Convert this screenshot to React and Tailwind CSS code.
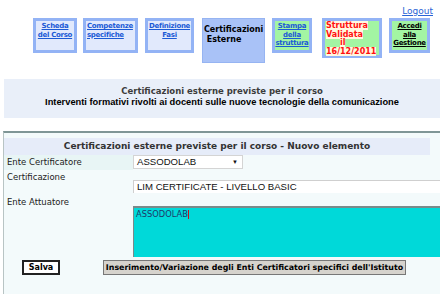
import React from "react";

const tabBox = "border-[3px] border-[#93b3f5] shrink-0";
const tabFont = { fontFamily: '"DejaVu Sans", Verdana, sans-serif' };

function Tab({ w, h, ml, bg, children, className = "" }) {
  return (
    <div className={`${tabBox} ${bg} ${ml} ${w} ${h} ${className}`} style={tabFont}>
      {children}
    </div>
  );
}

export default function App() {
  return (
    <div className="w-[440px] h-[294px] overflow-hidden bg-white" style={tabFont}>
      {/* top bar */}
      <div className="h-[18px] flex justify-end pr-[7px] pt-[6px]">
        <a className="text-[9px] leading-[10px] text-[#2a64d6] underline">Logout</a>
      </div>

      {/* tabs */}
      <div className="flex items-start h-[61px] text-[7px] leading-[8.6px] font-bold tracking-[-0.3px] whitespace-nowrap">
        <Tab ml="ml-[33px]" w="w-[44px]" h="h-[35px]" bg="bg-[#e1e9fc]" className="text-center pt-[1px]">
          <a className="text-[#1b5ad6] underline">Scheda<br />del Corso</a>
        </Tab>
        <Tab ml="ml-[6px]" w="w-[55px]" h="h-[35px]" bg="bg-[#e1e9fc]" className="pt-[1px] pl-[1px]">
          <a className="text-[#1b5ad6] underline">Competenze<br />specifiche</a>
        </Tab>
        <Tab ml="ml-[7px]" w="w-[49px]" h="h-[35px]" bg="bg-[#e1e9fc]" className="text-center pt-[1px]">
          <a className="text-[#1b5ad6] underline">Definizione<br />Fasi</a>
        </Tab>
        <div className="ml-[8px] w-[63px] h-[45px] bg-[#a9c2f7] border border-[#96b4f2] pt-[6px] pl-[1px] text-[8px] leading-[10px] tracking-normal text-black">
          Certificazioni<br />&nbsp;Esterne
        </div>
        <Tab ml="ml-[7px]" w="w-[40px]" h="h-[35px]" bg="bg-[#a3f5a3]" className="text-center pt-[1px]">
          <a className="text-[#1b5ad6] underline">Stampa<br />della<br />struttura</a>
        </Tab>
        <Tab ml="ml-[10px]" w="w-[60px]" h="h-[40px]" bg="bg-[#a3f5a3]" className="pt-[1px] pl-[1px] text-[8px] leading-[8.7px] tracking-normal text-[#ff1010]">
          <span className="bg-[#fff8e0]">Struttura</span><br />
          <span className="bg-[#fff8e0]">Validata</span><br />
          <span className="ml-[14px] bg-[#fff8e0]">il</span><br />
          <span className="bg-[#fff8e0]">16/12/2011</span>
        </Tab>
        <Tab ml="ml-[7px]" w="w-[41px]" h="h-[35px]" bg="bg-[#a3f5a3]" className="text-center pt-[1px]">
          <a className="text-black underline">Accedi<br />alla<br />Gestione</a>
        </Tab>
      </div>

      {/* header */}
      <div className="ml-[4px] h-[39px] bg-[#e9eff9] flex flex-col items-center pt-[7px]">
        <div className="text-[8.5px] leading-[10px] font-bold text-[#3c3c3c]">
          Certificazioni esterne previste per il corso
        </div>
        <div
          className="mt-[1px] text-[9.3px] leading-[11px] font-bold text-black"
          style={{ fontFamily: '"Liberation Sans", Arial, sans-serif' }}
        >
          Interventi formativi rivolti ai docenti sulle nuove tecnologie della comunicazione
        </div>
      </div>

      {/* form panel */}
      <div className="mt-[13px] ml-[3px] h-[163px] border-t-2 border-l border-t-[#7f9696] border-l-[#b8c4c4] bg-[#f3fafb]">
        <div className="mt-[5px] w-[426px] h-[17px] bg-[#e6ecf9] flex items-center justify-center text-[9px] font-bold text-[#333]">
          Certificazioni esterne previste per il corso - Nuovo elemento
        </div>

        <div className="flex h-[15px]">
          <div className="w-[129px] pl-[3px] bg-[#e8f5f5] text-[8.5px] leading-[15px] text-[#222]">Ente Certificatore</div>
          <div
            className="w-[110px] h-[14px] bg-white border border-[#d4d4d4] flex items-center justify-between pl-[3px] pr-[4px] text-[9.6px] text-[#111]"
            style={{ fontFamily: '"Liberation Sans", Arial, sans-serif' }}
          >
            <span>ASSODOLAB</span>
            <span className="text-[6px] leading-[6px]">▼</span>
          </div>
        </div>

        <div className="flex h-[25px]">
          <div className="w-[129px] pl-[3px] pt-[1px] text-[8.5px] leading-[12px] text-[#222]">Certificazione</div>
          <div
            className="mt-[10px] flex-1 h-[13px] bg-white border-t border-l border-[#cfcfcf] pl-[3px] text-[9.6px] leading-[12px] text-[#111]"
            style={{ fontFamily: '"Liberation Sans", Arial, sans-serif' }}
          >
            LIM CERTIFICATE - LIVELLO BASIC
          </div>
        </div>

        <div className="flex h-[62px]">
          <div className="w-[129px] pl-[3px] pt-[1px] text-[8.5px] leading-[12px] text-[#222]">Ente Attuatore</div>
          <div className="mt-[11px] flex-1 h-[51px] bg-[#00d9d9] border-t-2 border-l border-[#7a8a8a] pl-[2px] pt-[1px] text-[8.3px] leading-[11px] text-[#1e3a6a]">
            ASSODOLAB<span className="inline-block w-[1px] h-[9px] bg-[#d01010] align-middle"></span>
          </div>
        </div>

        <div className="flex items-center mt-[3px]">
          <button className="ml-[18px] w-[38px] h-[15px] bg-white border-2 border-[#222] text-[8px] font-bold leading-[11px] text-black">
            Salva
          </button>
          <button className="ml-[43px] w-[303px] h-[15px] bg-[#d6d3cd] border border-[#777] text-[7.9px] font-bold leading-[11px] text-black whitespace-nowrap">
            Inserimento/Variazione degli Enti Certificatori specifici dell'Istituto
          </button>
        </div>
      </div>
    </div>
  );
}
